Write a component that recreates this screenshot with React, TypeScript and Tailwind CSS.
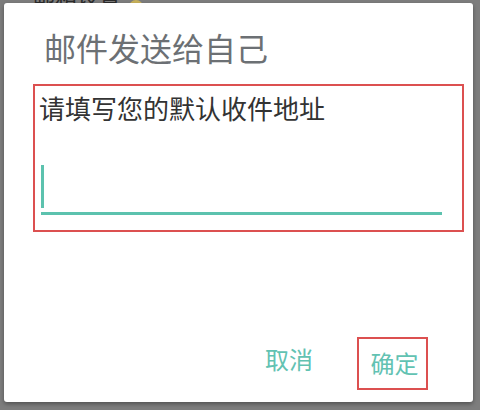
import React from 'react';

const cjk = { fontFamily: '"Noto Sans CJK SC", "Noto Sans", sans-serif' };

const App = () => {
  return (
    <div className="w-[480px] h-[410px] bg-[#7d7d7d] flex flex-col overflow-hidden" style={cjk}>
      {/* sliver of page behind the dialog */}
      <div className="h-[3px] overflow-hidden pl-[33px] flex items-end gap-2">
        <span className="text-[22px] leading-[22px] text-[#2b2b2b] mb-[-2px]">邮箱设置</span>
        <span className="w-[14px] h-[14px] rounded-full bg-[#c9b25a] mb-[-11px]" />
      </div>

      <div className="ml-[4px] mr-[7px] h-[399px] bg-white rounded-[3px] shadow-[0_2px_4px_rgba(0,0,0,0.35)] flex flex-col">
        {/* title */}
        <div className="pl-[40px] pt-[24px] h-[81px] text-[32px] leading-[40px] text-[#6c7074]">
          邮件发送给自己
        </div>

        {/* highlighted input area */}
        <div className="ml-[29px] w-[431px] h-[148px] border-2 border-[#dc5050] flex flex-col">
          <div className="pl-[4px] pt-[6px] text-[26px] leading-[32px] text-[#333333]">
            请填写您的默认收件地址
          </div>
          <div className="ml-[6px] mt-[41px] w-[401px] flex flex-col">
            <div className="w-[3px] h-[43px] bg-[#5cc2ae]" />
            <div className="mt-[4px] h-[3px] bg-[#5cc2ae]" />
          </div>
        </div>

        {/* actions */}
        <div className="mt-[105px] flex items-start">
          <div className="ml-[261px] mt-[7px] text-[24px] leading-[30px] text-[#62c2b2]">取消</div>
          <div className="ml-[44px] w-[71px] h-[53px] border-2 border-[#dc5050] flex items-center justify-center">
            <span className="ml-[4px] mt-[-2px] text-[24px] leading-[30px] text-[#62c2b2]">确定</span>
          </div>
        </div>
      </div>
    </div>
  );
};

export default App;
